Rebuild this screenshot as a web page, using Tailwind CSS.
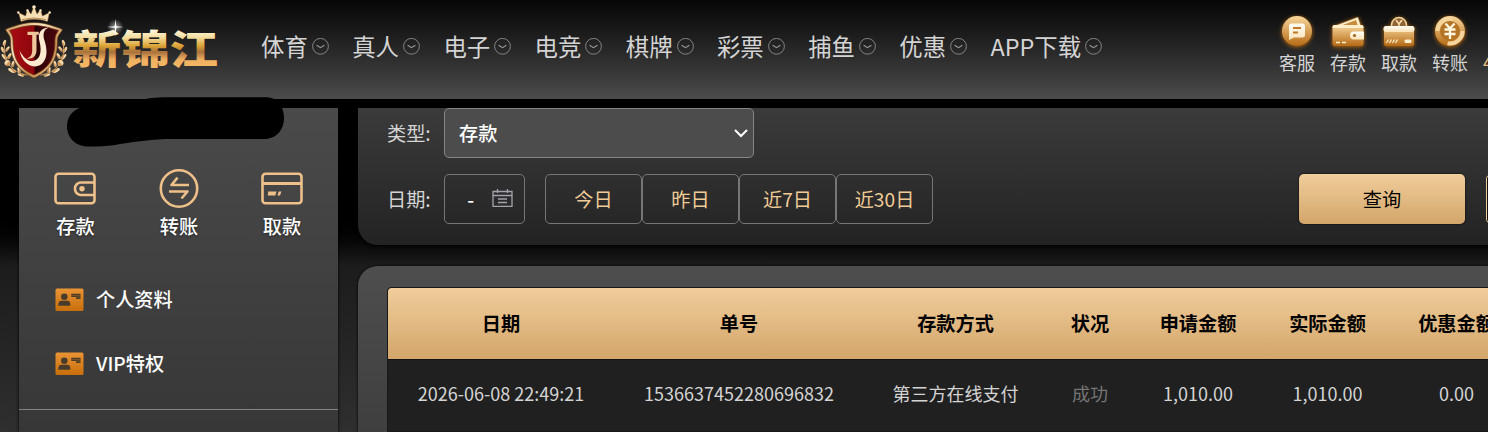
<!DOCTYPE html>
<html lang="zh-CN">
<head>
<meta charset="utf-8">
<title>新锦江</title>
<script src="https://cdn.jsdelivr.net/npm/@tailwindcss/browser@4"></script>
</head>
<body class="w-[1488px] h-[432px] overflow-hidden relative bg-black font-['Noto_Sans_CJK_SC',sans-serif] text-[#d4d4d4]">
<svg class="absolute size-0">
  <defs>
    <linearGradient id="gold" x1="0" y1="0" x2="0" y2="1"><stop offset="0" stop-color="#f8d79c"/><stop offset="1" stop-color="#b56a14"/></linearGradient>
    <linearGradient id="cream" x1="0" y1="0" x2="0" y2="1"><stop offset="0" stop-color="#fffdf5"/><stop offset="1" stop-color="#fbe3b8"/></linearGradient>
    <linearGradient id="orange" x1="0" y1="0" x2="0" y2="1"><stop offset="0" stop-color="#ea9434"/><stop offset="1" stop-color="#c86e0c"/></linearGradient>
    <linearGradient id="word" x1="0" y1="30" x2="0" y2="68" gradientUnits="userSpaceOnUse"><stop offset="0" stop-color="#fff8dc"/><stop offset=".2" stop-color="#f3dc9c"/><stop offset=".42" stop-color="#dba334"/><stop offset=".58" stop-color="#a8713c"/><stop offset=".78" stop-color="#f0b061"/><stop offset="1" stop-color="#f5b866"/></linearGradient>
    <linearGradient id="rim" x1="0" y1="0" x2="1" y2="1"><stop offset="0" stop-color="#c98f4e"/><stop offset=".35" stop-color="#fbe6bd"/><stop offset=".65" stop-color="#c58a4a"/><stop offset="1" stop-color="#f6d9a4"/></linearGradient>
    <linearGradient id="red" x1="0" y1="0" x2="1" y2="0"><stop offset="0" stop-color="#a80d12"/><stop offset=".5" stop-color="#8c060c"/><stop offset=".52" stop-color="#2a0206"/><stop offset="1" stop-color="#4c070d"/></linearGradient>
    <radialGradient id="glow"><stop offset="0" stop-color="#fff"/><stop offset=".25" stop-color="#fff" stop-opacity=".55"/><stop offset="1" stop-color="#fff" stop-opacity="0"/></radialGradient>
    <symbol id="chev" viewBox="0 0 17 17"><circle cx="8.5" cy="8.3" r="7.9" fill="none" stroke="#858585"/><path d="M4.6 7.2 8.5 9.7l3.9-2.5" fill="none" stroke="#9a9a9a" stroke-width="1.1"/></symbol>
    <symbol id="idcard" viewBox="0 0 29 24"><rect x=".5" y=".5" width="28" height="22.5" rx="1.5" fill="url(#orange)"/><circle cx="9.3" cy="8.8" r="3.3" fill="#493c2a"/><path d="M3.3 17.8v-1.4c0-2.5 1.5-3.6 3.3-3.6h5.6c1.8 0 3.1 1.1 3.1 3.6v1.4z" fill="#493c2a"/><path d="M16.3 5.8h9.2V11h-4.3V9h-4.9z" fill="#493c2a"/><path d="M16.5 7.4h9M21.5 9.2h4" stroke="#a4651c" stroke-width=".6"/></symbol>
  </defs>
</svg>

<header class="h-[99px] flex items-start bg-linear-to-b from-[#070707] to-[#4c4c4c] overflow-hidden">
  <svg class="w-[261px] h-[99px] shrink-0" viewBox="0 0 261 99">
    <!-- laurel -->
    <g fill="none" stroke="#c5985a" stroke-width="1"><path d="M5 42C2 59 10 73 28 75M63 42c3 17-5 31-23 33"/></g>
    <g fill="url(#rim)">
      <g id="leaves"><ellipse cx="4.500" cy="43" rx="1.5" ry="3.2" transform="rotate(15 4.500 43)"/><ellipse cx="7.500" cy="49" rx="1.4" ry="3.2" transform="rotate(35 7.500 49)"/><ellipse cx="3" cy="50" rx="1.5" ry="3.5" transform="rotate(-30 3 50)"/><ellipse cx="9.500" cy="56" rx="1.5" ry="3.2" transform="rotate(30 9.500 56)"/><ellipse cx="4.500" cy="57" rx="1.6" ry="3.8" transform="rotate(-45 4.500 57)"/><circle cx="7.500" cy="63" r="3"/><ellipse cx="13" cy="64" rx="1.5" ry="3.2" transform="rotate(10 13 64)"/><ellipse cx="12" cy="70.500" rx="1.800" ry="4.200" transform="rotate(-65 12 70.500)"/><ellipse cx="19" cy="70" rx="1.5" ry="3.200" transform="rotate(-15 19 70)"/><ellipse cx="21" cy="75" rx="1.3" ry="3.500" transform="rotate(-75 21 75)"/></g>
      <use href="#leaves" transform="matrix(-1 0 0 1 68 0)"/>
    </g>
    <!-- crown -->
    <path d="M21 21.500 18.500 12.500 25.500 16 27.500 9.500 31 14 34 6l3 8 3.500-4.500 2 6.500 7-3.500L47.500 21.500Q34 17 21 21.500z" fill="#f6dfb4" stroke="#8b5e31" stroke-width=".5"/>
    <path d="M22 19.500q12-3 24 0" stroke="#a5733d" stroke-width=".8" fill="none"/>
    <circle cx="34" cy="7" r="1.800" fill="#fce9c4"/><circle cx="18.300" cy="12.500" r="1.200" fill="#fce9c4"/><circle cx="49.700" cy="12.500" r="1.200" fill="#fce9c4"/><circle cx="27.500" cy="10.500" r="1.200" fill="#fce9c4"/><circle cx="40.500" cy="10.500" r="1.200" fill="#fce9c4"/>
    <!-- shield -->
    <path d="M34 22.500c6 0 11 1 16 2.500 4 1.500 8 2 12.500 4.500-1.500 4-5 5-5 11 0 18-5 29-23.500 37.500C15.500 69.500 10.500 58.500 10.500 40.500c0-6-3.500-7-5-11C10 27 14 26.500 18 25c5-1.500 10-2.500 16-2.500z" fill="url(#rim)" stroke="#5d3418" stroke-width=".6"/>
    <path d="M34 25.500c9 0 16 2.500 24.500 5-2 3-3.600 5-3.600 10C54.900 57 50.500 67.500 34 75 17.500 67.500 13.100 57 13.100 41c0-5-1.600-7-3.600-10.500C18 28 25 25.500 34 25.500z" fill="url(#red)" stroke="#6a2f14" stroke-width=".8"/>
    <path d="M27.500 31.800h11.300v3h-2.300V50c0 6-4 9.500-10.500 8.600 4.500-1 6.200-3.600 6.200-8.600V35h-4.700z" fill="#eec69c"/>
    <path d="M48.800 27.500c-5.500 2-6.300 7-4 14 3.800 12 1.500 23.500-9.300 25-7.500 0-14-6-16-16 4 7.500 8.500 11 13.500 10.500 7.500-1 9-10 6.500-19.500-2.200-8 1-13.500 9.300-14z" fill="#fbe9d0"/>
    <text x="72.500" y="64" textLength="145.500" lengthAdjust="spacingAndGlyphs" class="font-black text-[40px]" fill="url(#word)">新锦江</text>
    <circle cx="115.500" cy="27" r="8" fill="url(#glow)" opacity=".75"/>
    <path d="m115.500 19 .8 7.200 7.200.8-7.200.8-.8 9-.8-9-8-.8 8-.8z" fill="#fff"/>
  </svg>
  <nav class="flex pt-[29px] w-[1018px] shrink-0 text-[23.4px] leading-[34px] whitespace-nowrap">
    <a class="flex items-center gap-1 w-[91.2px]">体育<svg class="size-[17px]"><use href="#chev"/></svg></a>
    <a class="flex items-center gap-1 w-[91.2px]">真人<svg class="size-[17px]"><use href="#chev"/></svg></a>
    <a class="flex items-center gap-1 w-[91.2px]">电子<svg class="size-[17px]"><use href="#chev"/></svg></a>
    <a class="flex items-center gap-1 w-[91.2px]">电竞<svg class="size-[17px]"><use href="#chev"/></svg></a>
    <a class="flex items-center gap-1 w-[91.2px]">棋牌<svg class="size-[17px]"><use href="#chev"/></svg></a>
    <a class="flex items-center gap-1 w-[91.2px]">彩票<svg class="size-[17px]"><use href="#chev"/></svg></a>
    <a class="flex items-center gap-1 w-[91.2px]">捕鱼<svg class="size-[17px]"><use href="#chev"/></svg></a>
    <a class="flex items-center gap-1 w-[91.2px]">优惠<svg class="size-[17px]"><use href="#chev"/></svg></a>
    <a class="flex items-center gap-1">APP下载<svg class="size-[17px]"><use href="#chev"/></svg></a>
  </nav>
  <div class="flex shrink-0 gap-[15px] pt-[14px] text-[18px] leading-6 whitespace-nowrap">
    <a class="flex flex-col items-center w-9">
      <svg class="w-9 h-[36px] drop-shadow-[0_1px_2px_#b86a10]" viewBox="0 0 36 36"><circle cx="18" cy="17" r="15" fill="url(#gold)"/><path d="M12.500 9.500h11a2.500 2.500 0 0 1 2.500 2.500v9a2.500 2.500 0 0 1-2.500 2.500H15L10 26V12a2.500 2.500 0 0 1 2.500-2.500z" fill="url(#cream)"/><path d="M14 14h8M14 18.500h5" stroke="#c07a25" stroke-width="1.800"/></svg>
      客服</a>
    <a class="flex flex-col items-center w-9">
      <svg class="w-9 h-[36px] drop-shadow-[0_1px_2px_#b86a10]" viewBox="0 0 36 36"><path d="m4 12 24-9 3 9z" fill="#fff0cf" stroke="#9a6428" stroke-width=".6"/><path d="m10 12 16-6 2 6z" fill="#c98b3c"/><rect x="2.500" y="11" width="31" height="21" rx="2.500" fill="url(#gold)"/><path d="M2.500 14V13a2 2 0 0 1 2-2h27a2 2 0 0 1 2 2v1z" fill="#fff0cc"/><path d="M34 17.500H24a4 4 0 0 0 0 8h10z" fill="url(#cream)"/><circle cx="24.500" cy="21.500" r="1.600" fill="#a9651c"/><path d="M6 28.500h4M12 28.500h4" stroke="#fff1d0" stroke-width="1.600"/></svg>
      存款</a>
    <a class="flex flex-col items-center w-9">
      <svg class="w-9 h-[36px] drop-shadow-[0_1px_2px_#b86a10]" viewBox="0 0 36 36"><circle cx="18" cy="11" r="7.500" fill="#8f6437" stroke="#f4d49d" stroke-width="1.500"/><path d="m15 6 3 4 3-4M18 10v4" stroke="#f9dda9" stroke-width="1.600" fill="none"/><rect x="3" y="12" width="30" height="20" rx="2.500" fill="url(#gold)"/><rect x="2.500" y="12" width="31" height="6" rx="2.500" fill="url(#cream)"/><path d="m5.500 29 2-3.500m1 3.500 2-3.500m1 3.500 2-3.500m1 3.500 2-3.500" stroke="#fff1d0" stroke-width="1.200"/><rect x="23.500" y="25.500" width="7" height="3.500" rx="1.500" fill="#fff1d0"/></svg>
      取款</a>
    <a class="flex flex-col items-center w-9">
      <svg class="w-9 h-[36px] drop-shadow-[0_1px_2px_#b86a10]" viewBox="0 0 36 36"><circle cx="18" cy="17" r="15" fill="url(#gold)"/><circle cx="18" cy="17" r="12.500" fill="none" stroke="#f5d59d" stroke-width="4" stroke-dasharray="22 17"/><circle cx="18" cy="17" r="10" fill="#b57424"/><path d="m13.500 9.500 4.500 5 4.500-5M12.500 15.500h11M12.500 20h11M18 14.500V25" fill="none" stroke="#fff6df" stroke-width="2.300"/></svg>
      转账</a>
    <a class="w-9 pt-[36px] text-[#e8bd80]">4</a>
  </div>
</header>

<div class="h-[333px] pt-[9px] flex overflow-hidden bg-linear-to-b from-black from-33% via-[#1c1c1c] via-50% to-[#2f2f2f]">
  <aside class="ml-[19px] w-[319px] h-[324px] shrink-0 bg-linear-to-b from-[#4a4a4a] to-[#373737] shadow-[0_0_3px_#000] text-white font-medium text-[19.2px] leading-7">
    <div class="flex pt-[59px] pl-[5px] [text-shadow:0_1px_2px_#222]">
      <a class="flex flex-col items-center w-[103px]">
        <svg class="w-[44px] h-[42px] mb-[3px] mr-[2px]" viewBox="0 0 44 42" fill="none" stroke="#efc08a" stroke-width="2.600"><rect x="2.500" y="6.800" width="39" height="29.500" rx="3"/><path d="M41 15.500H28a6 6 0 0 0-6 6v.5a6 6 0 0 0 6 6h13"/><circle cx="29" cy="21.700" r="1.400" fill="#efc08a"/></svg>存款</a>
      <a class="flex flex-col items-center w-[104px]">
        <svg class="w-[44px] h-[42px] mb-[3px]" viewBox="0 0 44 42" fill="none" stroke="#efc08a" stroke-width="2.600" stroke-linejoin="round"><circle cx="22" cy="21.500" r="18.200"/><path d="M20.500 10.700 14.500 18H32M12 24.500h18.500L24.500 31.500"/></svg>转账</a>
      <a class="flex flex-col items-center w-[102px]">
        <svg class="w-[44px] h-[42px] mb-[3px] mr-px" viewBox="0 0 44 42" fill="none" stroke="#efc08a" stroke-width="2.600"><rect x="2.500" y="6.800" width="39" height="29.500" rx="3"/><path d="M3 16.500h38" stroke-width="3"/><path d="m8.300 24.500h8.200l-1.200 4H7.800zm10.500 0h2.600l-1.400 4h-2.600z" fill="#efc08a" stroke="none"/></svg>取款</a>
    </div>
    <a class="flex items-center h-16 mt-[27px] pl-9 gap-3"><svg class="w-[29px] h-6 shrink-0 mt-px"><use href="#idcard"/></svg>个人资料</a>
    <a class="flex items-center h-16 pl-9 gap-3"><svg class="w-[29px] h-6 shrink-0 mt-px"><use href="#idcard"/></svg>VIP特权</a>
    <div class="mt-[14px] border-t border-[#858585]"></div>
  </aside>

  <main class="ml-5 w-[1180px] shrink-0">
    <section class="h-[137px] rounded-b-[20px] bg-linear-to-b from-[#3b3b3b] to-[#232323] shadow-[0_1px_4px_#000] pl-[29px] text-[19.2px]">
      <div class="flex items-center h-[50px]">
        <label class="w-[57px] shrink-0">类型:</label>
        <div class="w-[310px] h-[50px] rounded-[5px] border border-[#858585] bg-[#4c4c4c] flex items-center justify-between pl-[14px] pr-1 text-white font-medium">存款
          <svg class="w-4 h-4" viewBox="0 0 16 16"><path d="m2 5 6 6 6-6" fill="none" stroke="#fff" stroke-width="2"/></svg>
        </div>
      </div>
      <div class="flex items-center h-[50px] mt-4">
        <label class="w-[57px] shrink-0">日期:</label>
        <div class="w-[81px] h-[50px] shrink-0 rounded-[5px] border border-[#767676] flex items-center justify-end pr-[11px] gap-[18px] text-white"><span class="font-medium">-</span>
          <svg class="w-[21px] h-5" viewBox="0 0 21 20" fill="none" stroke="#a3a3ad" stroke-width="1.300"><path d="M1 2.500h19v14.800H1zM1 6.500h19M5.500 0v4M15.500 0v4M6 10h9M6 13.500h9"/></svg>
        </div>
        <div class="flex shrink-0 ml-5 text-[#f0cb96]">
          <button class="w-[97px] h-[50px] rounded-[5px] border border-[#767676]">今日</button>
          <button class="w-[97px] h-[50px] rounded-[5px] border border-[#767676]">昨日</button>
          <button class="w-[97px] h-[50px] rounded-[5px] border border-[#767676]">近7日</button>
          <button class="w-[97px] h-[50px] rounded-[5px] border border-[#767676]">近30日</button>
        </div>
        <button class="ml-[366px] w-[166px] h-[50px] shrink-0 rounded-[5px] bg-linear-to-b from-[#f0cd9b] to-[#d3a66a] text-black shadow-[0_0_2px_#000]">查询</button>
        <button class="ml-[21px] w-20 h-[50px] shrink-0 rounded-[5px] border border-[#f0cd9b] bg-[#111]"></button>
      </div>
    </section>

    <section class="mt-[21px] h-[200px] rounded-t-[20px] bg-linear-to-b from-[#4e4e4e] to-[#3c3c3c] shadow-[0_0_3px_#000] pt-[22px] pl-[30px]">
      <div class="rounded-tl-[3px] overflow-hidden bg-[#202020] outline outline-[#16191a] whitespace-nowrap">
        <div class="grid grid-cols-[226px_250px_183px_86px_130px_129px_129px] h-[71px] items-center text-center bg-linear-to-b from-[#f0cd9b] to-[#d3a66a] text-black font-bold text-[19.2px]">
          <div>日期</div><div>单号</div><div>存款方式</div><div>状况</div><div>申请金额</div><div>实际金额</div><div>优惠金额</div>
        </div>
        <div class="grid grid-cols-[226px_250px_183px_86px_130px_129px_129px] h-[72px] pb-1 items-center text-center border-t border-[#111] text-[18px]">
          <div>2026-06-08 22:49:21</div><div>1536637452280696832</div><div>第三方在线支付</div><div class="text-[#757575]">成功</div><div>1,010.00</div><div>1,010.00</div><div>0.00</div>
        </div>
      </div>
    </section>
  </main>
</div>

<!-- redaction stroke over the account name -->
<svg class="absolute left-0 top-[90px] w-[300px] h-[64px]" viewBox="0 90 300 64"><path d="M88 146.500C75 146.500 67 137 67 126.500c0-12 8-19 22-21.500l50-5q12-2.800 24-2.800h104c10 0 17 9 17 20.500S277 139 264 139h-99c-19 1-37 3.500-50 6-8 1.500-17 1.500-27 1.500z" fill="#000"/></svg>
</body>
</html>
